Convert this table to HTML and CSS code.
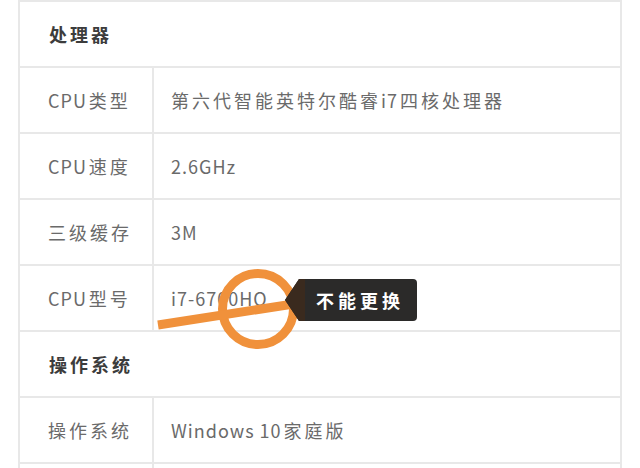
FILE: index.html
```html
<!DOCTYPE html>
<html lang="zh">
<head>
<meta charset="utf-8">
<link rel="stylesheet" href="styles.css">
</head>
<body>
<div class="page">
  <div class="specs">
    <div class="row section">处理器</div>
    <div class="row"><div class="label"><span class="lat">CPU</span>类型</div><div class="value">第六代智能英特尔酷睿<span class="lat">i7</span>四核处理器</div></div>
    <div class="row"><div class="label"><span class="lat">CPU</span>速度</div><div class="value"><span class="lat">2.6GHz</span></div></div>
    <div class="row"><div class="label">三级缓存</div><div class="value"><span class="lat">3M</span></div></div>
    <div class="row"><div class="label"><span class="lat">CPU</span>型号</div><div class="value"><span class="lat">i7-6700HQ</span></div></div>
    <div class="row section">操作系统</div>
    <div class="row"><div class="label">操作系统</div><div class="value"><span class="lat">Windows 10</span>家庭版</div></div>
    <div class="row"><div class="label">&nbsp;</div><div class="value">&nbsp;</div></div>
  </div>

  <svg class="mark" width="640" height="468" viewBox="0 0 640 468">
    <circle cx="258" cy="309" r="35.5" fill="none" stroke="#f0913b" stroke-width="9"/>
    <line x1="158" y1="325" x2="300" y2="303" stroke="#f0913b" stroke-width="9"/>
  </svg>

  <div class="tag">
    <svg class="tag-bg" width="133" height="44" viewBox="0 0 133 44">
      <path d="M0 22 L14 1 L128 1 Q132 1 132 5 L132 39 Q132 43 128 43 L14 43 Z" fill="#2b2a29"/>
      <path d="M0 22 L14 1 L20 1 L20 43 L14 43 Z" fill="#3a2a1e"/>
    </svg>
    <span class="tag-text">不能更换</span>
  </div>
</div>
</body>
</html>
```
FILE: styles.css
```css
html, body {
  margin: 0;
  padding: 0;
  background: #ffffff;
}

.page {
  position: relative;
  width: 640px;
  height: 468px;
  overflow: hidden;
  font-family: "Noto Sans CJK SC", "Noto Sans", sans-serif;
}

.specs {
  margin-left: 18px;
  width: 604px;
  box-sizing: border-box;
  border-left: 2px solid #e8e8e8;
  border-right: 2px solid #e8e8e8;
}

.row {
  display: flex;
  height: 66px;
  box-sizing: border-box;
  border-top: 2px solid #e8e8e8;
  font-size: 18px;
  letter-spacing: 3px;
  color: #6a6a6a;
}

.section {
  align-items: center;
  padding-left: 29px;
  font-weight: 700;
  color: #3c3c3c;
}

.label {
  width: 134px;
  flex: none;
  display: flex;
  align-items: center;
  padding-left: 28px;
  box-sizing: border-box;
  border-right: 2px solid #e8e8e8;
  white-space: pre;
}

.value {
  flex: 1;
  display: flex;
  align-items: center;
  padding-left: 17px;
  white-space: pre;
}

.lat {
  letter-spacing: 1px;
  margin-right: 2px;
}

.mark {
  position: absolute;
  left: 0;
  top: 0;
  pointer-events: none;
}

.tag {
  position: absolute;
  left: 285px;
  top: 278px;
  width: 133px;
  height: 44px;
  display: flex;
  align-items: center;
  padding-left: 31px;
  box-sizing: border-box;
}

.tag-bg {
  position: absolute;
  left: 0;
  top: 0;
}

.tag-text {
  position: relative;
  color: #ffffff;
  font-size: 18px;
  font-weight: 700;
  letter-spacing: 4px;
}
```
